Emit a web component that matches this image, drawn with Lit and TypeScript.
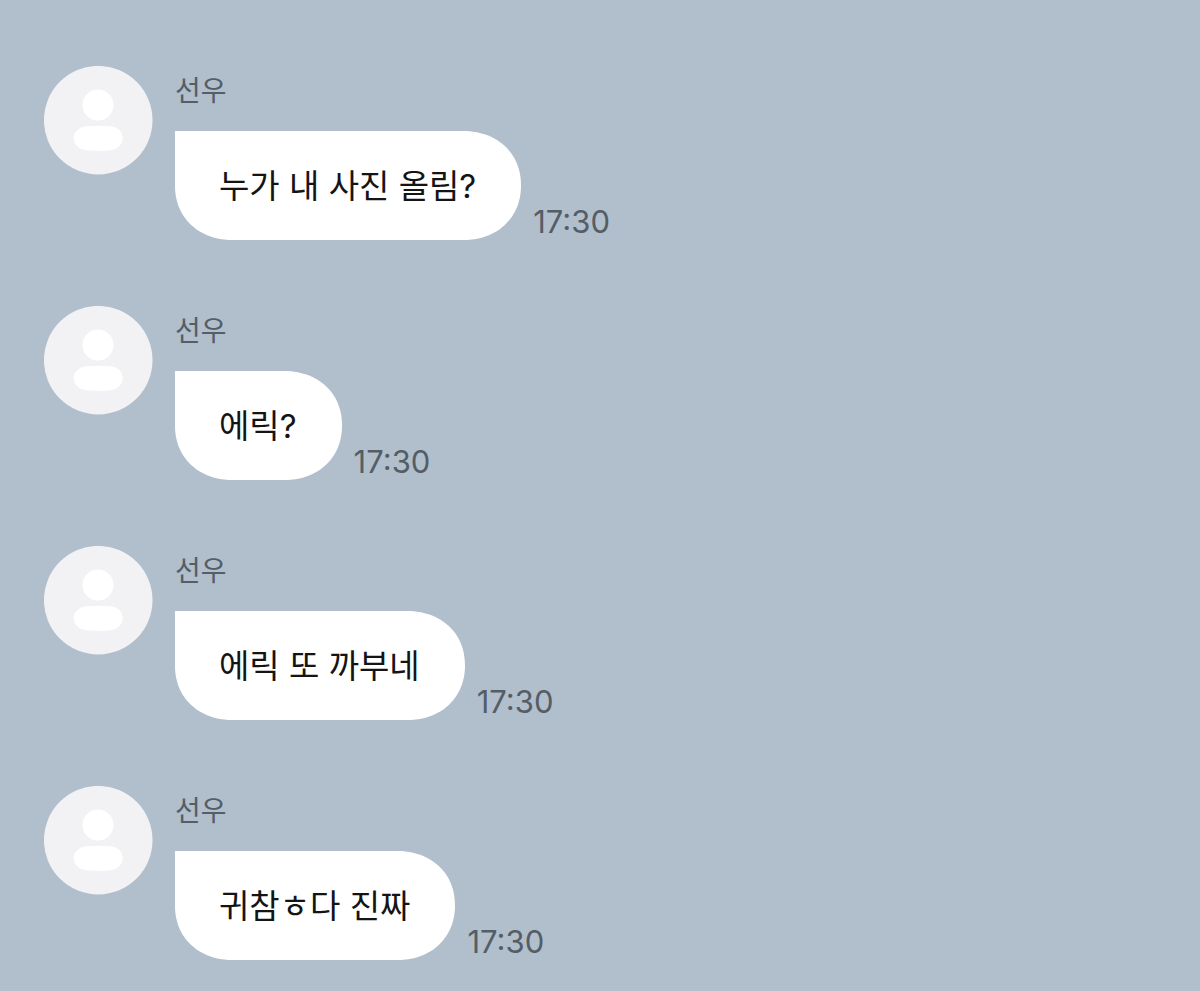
import { LitElement, html, css } from "lit";
import { customElement, property } from "lit/decorators.js";

interface Message {
  sender: string;
  text: string;
  time: string;
}

const MESSAGES: Message[] = [
  { sender: "선우", text: "누가 내 사진 올림?", time: "17:30" },
  { sender: "선우", text: "에릭?", time: "17:30" },
  { sender: "선우", text: "에릭 또 까부네", time: "17:30" },
  { sender: "선우", text: "귀참ㅎ다 진짜", time: "17:30" },
];

@customElement("chat-message")
export class ChatMessage extends LitElement {
  @property({ attribute: false }) message!: Message;

  static styles = css`
    :host {
      display: flex;
      align-items: flex-start;
      gap: 22px;
    }
    .avatar {
      flex: none;
      display: block;
      width: 109px;
      height: 109px;
    }
    .content {
      min-width: 0;
    }
    .sender {
      padding-top: 5px;
      margin-bottom: 20px;
      font-size: 28px;
      line-height: 40px;
      color: #555d66;
    }
    .row {
      display: flex;
      align-items: flex-end;
      gap: 12px;
    }
    .bubble {
      margin: 0;
      padding: 31px 45px 30px 44px;
      background: #fff;
      border-radius: 0 58px 58px 58px / 0 54px 54px 54px;
      corner-shape: superellipse(1.08);
      font-size: 33px;
      line-height: 48px;
      color: #141414;
    }
    .time {
      flex: none;
      font-size: 31px;
      line-height: 36px;
      color: #555d66;
    }
  `;

  render() {
    const { sender, text, time } = this.message;
    return html`
      <svg class="avatar" viewBox="0 0 109 109" aria-hidden="true">
        <circle cx="54.2" cy="54.2" r="54.3" fill="#f2f2f5" />
        <circle cx="54" cy="39" r="15.5" fill="#fff" />
        <path
          fill="#fff"
          d="M43 60.2 Q54.5 59.4 66 60.2 C74 60.7 78.7 66 78.7 72.3 C78.7 78.5 74 83.7 66 84.3 Q54.5 85.3 43 84.3 C35 83.7 29.7 78.5 29.7 72.3 C29.7 66 35 60.7 43 60.2Z"
        />
      </svg>
      <div class="content">
        <div class="sender">${sender}</div>
        <div class="row">
          <p class="bubble">${text}</p>
          <time class="time">${time}</time>
        </div>
      </div>
    `;
  }
}

@customElement("app-root")
export class AppRoot extends LitElement {
  static styles = css`
    :host {
      display: block;
      box-sizing: border-box;
      min-height: 100vh;
      padding: 66px 44px 31px;
      background: #b1bfcd;
      font-family: Inter, "Noto Sans CJK KR", sans-serif;
    }
    .thread {
      display: flex;
      flex-direction: column;
      gap: 66px;
      margin: 0;
      padding: 0;
      list-style: none;
    }
  `;

  render() {
    return html`
      <ul class="thread">
        ${MESSAGES.map(
          (m) => html`<li><chat-message .message=${m}></chat-message></li>`
        )}
      </ul>
    `;
  }
}
